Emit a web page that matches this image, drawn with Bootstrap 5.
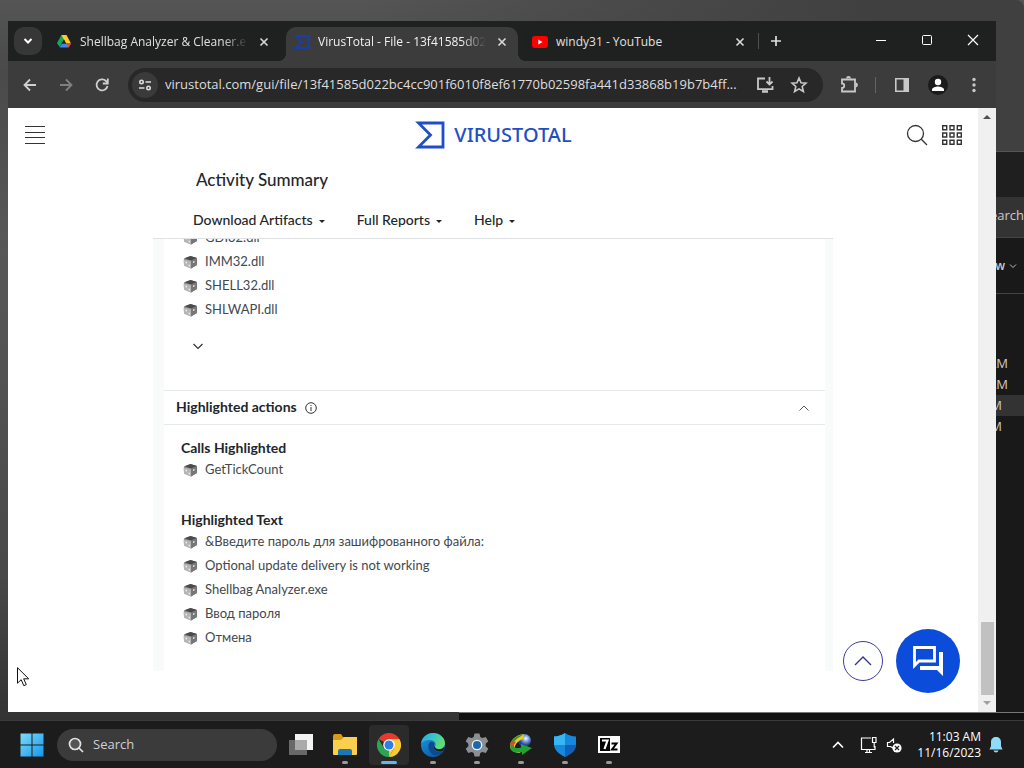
<!DOCTYPE html>
<html lang="en">
<head>
<meta charset="utf-8">
<meta name="viewport" content="width=device-width, initial-scale=1">
<title>VirusTotal - File</title>
<link href="https://cdn.jsdelivr.net/npm/bootstrap@5.3.0/dist/css/bootstrap.min.css" rel="stylesheet">
<script src="https://cdn.jsdelivr.net/npm/bootstrap@5.3.0/dist/js/bootstrap.bundle.min.js"></script>
<style>
  body { font-family: "Open Sans", "Noto Sans", sans-serif; font-size: 13px; background: #111; }
  svg { display: block; flex: none; }
  button { font: inherit; color: inherit; background: none; border: 0; padding: 0; }
  .desk { background: linear-gradient(180deg, #555 0, #4a4a4a 10%, #585858 35%, #484848 80%, #333 100%); }
  .desk-window { inset: 0 0 0 0; background: linear-gradient(90deg, rgba(50,50,50,0) 35%, #404040 85%); border-radius: 8px; }

  /* file manager behind the browser */
  .explorer { left: 459px; right: 0; top: 151px; bottom: 0; background: #191919; color: #ccc; border-top: 1px solid #555; text-align: right; font-size: 13px; }
  .explorer .top-gap { height: 45px; background: #1f1f1f; }
  .explorer .find-row { height: 41px; background: #333; border-bottom: 1px solid #444; line-height: 36px; }
  .explorer .view-row { height: 56px; border-bottom: 1px solid #444; font-size: 12px; font-weight: 600; padding-right: 7px; }
  .explorer .times { padding-top: 59px; }
  .explorer .times li { line-height: 21px; padding-right: 16px; }
  .explorer .times li.near { padding-right: 22px; }
  .explorer .times .picked { background: #333; }
  .explorer .foot { height: 8px; bottom: 0; left: 0; right: 0; background: #121212; border-top: 1px solid #777; }

  .browser { left: 8px; right: 28px; top: 21px; bottom: 8px; background: #3c3c3c; color: #dadada; }
  .tabs { background: #1f2020; padding-left: 6px; height: 40px; }
  .tab-menu { width: 28px; height: 28px; border-radius: 10px; background: #373737; margin-right: 6px; }
  .tab-item { width: 232px; height: 34px; padding: 0 8px 4px; margin-right: 6px; gap: 8px; font-weight: 500; font-size: 12px; min-width: 0; border-radius: 10px 10px 0 0; position: relative; }
  .tab-item.final { margin-right: 2px; }
  .tab-item .tab-text { flex: 1; overflow: hidden; white-space: nowrap; color: #e0e0e0; -webkit-mask-image: linear-gradient(90deg, #000 85%, transparent); mask-image: linear-gradient(90deg, #000 85%, transparent); }
  .tab-item .tab-text.whole { -webkit-mask-image: none; mask-image: none; }
  .tab-item.current { background: #3c3c3c; }
  .tab-item.current .tab-text { color: #f2f2f2; }
  .tab-item.current::before, .tab-item.current::after { content: ""; position: absolute; bottom: 0; width: 8px; height: 8px; }
  .tab-item.current::before { left: -8px; background: radial-gradient(circle at 0 0, #1f2020 8px, #3c3c3c 8px); }
  .tab-item.current::after { right: -8px; background: radial-gradient(circle at 100% 0, #1f2020 8px, #3c3c3c 8px); }
  .caption-btn { width: 46px; height: 38px; color: #fff; }
  .tools { height: 47px; padding: 0 4px; }
  .tool-btn { width: 36px; height: 34px; }
  .omni { height: 34px; border-radius: 17px; background: #282828; margin: 0 8px; padding: 0 15px 0 4px; }
  .omni .site { width: 26px; height: 26px; border-radius: 13px; background: #3a3a3a; }
  .omni input { background: none; border: 0; outline: 0; color: #dedede; font-size: 13px; padding: 0; min-width: 0; margin-left: 7px; }

  /* web page */
  .view { background: #fff; color: #21262b; font-family: Lato, "Open Sans", sans-serif; }
  .page-head { height: 54px; padding: 0 16px 0 17px; }
  .page-head > * { flex: 1; }
  .page-tools { gap: 14px; }
  .wordmark { color: #1f4fc4; font-family: "Noto Sans", sans-serif; font-size: 20px; font-weight: 500; text-decoration: none; gap: 9px; line-height: 28px; }
  .report { max-width: 680px; margin: 0 auto; }
  .report h1 { font-size: 17px; line-height: 36px; margin: 0; padding-left: 43px; font-weight: 500; }
  .menus { height: 41px; padding: 2px 0 0 40px; border-bottom: 1px solid #e0e3e5; gap: 32px; font-size: 14px; font-weight: 500; }
  .menus .dropdown-toggle::after { border-width: 3px; border-bottom: 0; margin-left: 6px; vertical-align: 2px; }
  .clip { overflow: hidden; background: #f9fafa; padding: 0 8px 0 11px; }
  .sheet { background: #fff; }
  .sheet ul { margin: 0; padding: 0 0 0 18px; list-style: none; font-size: 13px; color: #42484e; }
  .sheet li { height: 24px; display: flex; align-items: center; gap: 6px; }
  .sheet ul.cut { margin-top: -13px; }
  .more { height: 68px; padding: 0 0 20px 28px; }
  .sheet h2 { font-size: 14px; font-weight: 700; margin: 0; }
  .band { height: 35px; border: solid #e6e9eb; border-width: 1px 0; padding: 0 15px 0 12px; gap: 8px; }
  .sheet h3 { font-size: 14px; line-height: 20px; font-weight: 700; margin: 0; padding-left: 17px; }
  .details { padding: 13px 0 21px; }
  .details section + section { margin-top: 28px; }
  .floaters { right: 18px; bottom: 19px; gap: 13px; }
  .go-top { width: 40px; height: 40px; border: 1px solid #3c3ca0; border-radius: 50%; color: #33338f; background: #fff; }
  .chat { width: 64px; height: 64px; border-radius: 50%; background: #0b4dda; color: #fff; }
  .bar-v { width: 18px; background: #f0f0f0; padding: 6px 0; }
  .bar-v .thumb { width: 13px; height: 73px; background: #c1c1c1; margin-bottom: 5px; }

  .pointer { left: 17px; bottom: 33px; }

  .task { height: 48px; background: #1c1c1c; border-top: 1px solid #3a3a3a; padding: 0 21px 0 10px; color: #fff; }
  .task-btn { width: 44px; height: 46px; position: relative; }
  .task-btn.open::after { content: ""; position: absolute; left: 19px; bottom: 4px; width: 6px; height: 3px; border-radius: 2px; background: #999; }
  .task-btn.front::before { content: ""; position: absolute; inset: 3px 2px 3px 2px; background: #2b2b2b; border-radius: 4px; }
  .task-btn.front::after { left: 14px; width: 16px; background: #60b8e8; }
  .task-btn svg { position: relative; }
  .find { width: 220px; height: 32px; border-radius: 16px; background: #3b3b3b; margin: 0 2px 0 3px; padding: 0 11px; gap: 9px; }
  .find input { background: none; border: 0; outline: 0; color: #d0d0d0; font-size: 13px; padding: 0; min-width: 0; }
  .find input::placeholder { color: #d0d0d0; opacity: 1; }
  .clock { font-size: 12px; line-height: 16px; text-align: right; margin: 0 8px 0 15px; }
</style>
</head>
<body>
<svg width="0" height="0" class="position-absolute" aria-hidden="true">
  <symbol id="cube" viewBox="0 0 16 16">
    <path d="M1.500 4.500 8 2l6.500 2v7L8.500 14.500 1.500 11.500z" fill="#888"/>
    <path d="M2 4.200 8 2l6.500 2L8.500 6.500z" fill="#4a4a4a"/>
    <path d="M8.500 6.500 14.500 4.200V11L8.500 14.500z" fill="#777"/>
    <path d="M1 5.500 8.500 7v7.500L1.500 11.500z" fill="#b5b5b5"/>
    <path d="M3 7.500l1.500.500v1.500L3 9zM6 10.500l1.500.500v1.500L6 12zM10.500 7.500 12 7v1.500l-1.500.500z" fill="#eee"/>
  </symbol>
  <symbol id="cross" viewBox="0 0 16 16"><path d="M4.500 4.500l7 7m0-7l-7 7" stroke="currentColor" stroke-width="1.600"/></symbol>
</svg>

<div class="d-flex flex-column vh-100 overflow-hidden">
  <main class="desk flex-grow-1 position-relative overflow-hidden">
    <div class="desk-window position-absolute"></div>
    <section class="explorer position-absolute" aria-label="File Explorer">
      <div class="top-gap"></div>
      <div class="find-row">Search</div>
      <div class="view-row d-flex align-items-center justify-content-end gap-1">View <svg width="8" height="8" viewBox="0 0 8 8" fill="none" stroke="#bbb"><path d="M1 2.500l3 3 3-3"/></svg></div>
      <ul class="times list-unstyled m-0"><li>11:02 AM</li><li>11:02 AM</li><li class="near picked">11:02 AM</li><li class="near">11:02 AM</li></ul>
      <div class="foot position-absolute"></div>
    </section>

    <section class="browser position-absolute d-flex flex-column" aria-label="Browser">
      <div class="tabs d-flex align-items-start">
        <button class="tab-menu mt-auto mb-auto d-flex align-items-center justify-content-center" aria-label="Search tabs"><svg width="12" height="12" viewBox="0 0 12 12" fill="none" stroke="#fff" stroke-width="2"><path d="M2.500 4l3.500 3.500L9.500 4"/></svg></button>
        <div class="tab-item d-flex align-items-center mt-auto">
          <svg width="16" height="16" viewBox="0 0 16 16"><path d="M5.500 1h5L8 5.500 3.500 13 1 9z" fill="#14a85a"/><path d="M5.500 1h5L15 9.500h-5z" fill="#ffc928"/><path d="M3.500 13.500 6 9.500h9L12.500 13.500z" fill="#4285f4"/><path d="M10 9.500h5l-2.200 4z" fill="#e8453c"/><path d="M8 5.500l2 4H6z" fill="#1f2020"/></svg>
          <span class="tab-text">Shellbag Analyzer &amp; Cleaner.e</span>
          <button aria-label="Close tab"><svg width="16" height="16"><use href="#cross"/></svg></button>
        </div>
        <div class="tab-item current d-flex align-items-center mt-auto">
          <svg width="16" height="16" viewBox="0 0 16 16" fill="none" stroke="#1b3da5" stroke-width="2"><path d="M1.500 2H15v12H1.500L8 8z"/></svg>
          <span class="tab-text">VirusTotal - File - 13f41585d02</span>
          <button aria-label="Close tab"><svg width="16" height="16"><use href="#cross"/></svg></button>
        </div>
        <div class="tab-item final d-flex align-items-center mt-auto">
          <svg width="16" height="16" viewBox="0 0 16 16"><rect y="2" width="16" height="12" rx="3" fill="#f00"/><path d="M6.300 5.500v5L10.500 8z" fill="#fff"/></svg>
          <span class="tab-text whole">windy31 - YouTube</span>
          <button aria-label="Close tab"><svg width="16" height="16"><use href="#cross"/></svg></button>
        </div>
        <span class="vr align-self-center" style="height:16px"></span>
        <button class="align-self-center ms-2" aria-label="New tab"><svg width="18" height="18" viewBox="0 0 18 18" stroke="#ddd" stroke-width="1.700"><path d="M9 4v10M4 9h10"/></svg></button>
        <div class="d-flex ms-auto">
          <button class="caption-btn d-flex align-items-center justify-content-center" aria-label="Minimize"><svg width="12" height="12" viewBox="0 0 12 12" stroke="#fff"><path d="M1 6.500h10"/></svg></button>
          <button class="caption-btn d-flex align-items-center justify-content-center" aria-label="Maximize"><svg width="12" height="12" viewBox="0 0 12 12" fill="none" stroke="#fff"><rect x="1.500" y="1.500" width="9" height="9" rx="1"/></svg></button>
          <button class="caption-btn d-flex align-items-center justify-content-center" aria-label="Close"><svg width="12" height="12" viewBox="0 0 12 12" stroke="#fff" stroke-width="1.200"><path d="M1 1l10 10M11 1L1 11"/></svg></button>
        </div>
      </div>

      <div class="tools d-flex align-items-center">
        <button class="tool-btn d-flex align-items-center justify-content-center" aria-label="Back"><svg width="16" height="16" viewBox="0 0 16 16" fill="none" stroke="#d0d0d0" stroke-width="1.800"><path d="M14 8H3M8 2.500L2.500 8 8 13.500"/></svg></button>
        <button class="tool-btn d-flex align-items-center justify-content-center" aria-label="Forward"><svg width="16" height="16" viewBox="0 0 16 16" fill="none" stroke="#808080" stroke-width="1.800"><path d="M2 8h11M8 2.500L13.500 8 8 13.500"/></svg></button>
        <button class="tool-btn d-flex align-items-center justify-content-center" aria-label="Reload"><svg width="16" height="16" viewBox="0 0 16 16" fill="none" stroke="#d0d0d0" stroke-width="1.800"><path d="M13.500 9a5.500 5.500 0 1 1-1.500-5l1.500 1.700M13.800 1.500v5h-5"/></svg></button>
        <form class="omni flex-grow-1 d-flex align-items-center">
          <button type="button" class="site d-flex align-items-center justify-content-center" aria-label="Site information"><svg width="14" height="14" viewBox="0 0 14 14" fill="none" stroke="#ddd" stroke-width="1.600"><circle cx="3.500" cy="4" r="1.700"/><path d="M7.500 4H13M1 10h5.500"/><circle cx="10.500" cy="10" r="1.700"/></svg></button>
          <input class="flex-grow-1" aria-label="Address" value="virustotal.com/gui/file/13f41585d022bc4cc901f6010f8ef61770b02598fa441d33868b19b7b4ff...">
          <button type="button" class="ms-2" aria-label="Install page"><svg width="18" height="18" viewBox="0 0 18 18" fill="none" stroke="#c8c8c8" stroke-width="1.800"><path d="M9 2.500H2v10.700h14.500V10M13.500 1v7M10.500 5.500l3 3 3-3"/><path d="M6 15.500h6" stroke-width="2.500"/></svg></button>
          <button type="button" class="ms-3" aria-label="Bookmark"><svg width="18" height="18" viewBox="0 0 18 18" fill="none" stroke="#c8c8c8" stroke-width="1.600"><path d="M9 2l2 4.700 5 .5-3.800 3.300 1.200 5L9 12.900l-4.400 2.600 1.200-5L2 7.200l5-.5z"/></svg></button>
        </form>
        <button class="tool-btn d-flex align-items-center justify-content-center" aria-label="Extensions"><svg width="18" height="18" viewBox="0 0 18 18" fill="none" stroke="#c8c8c8" stroke-width="1.800"><path d="M2 3.500h13V15.500H2v-3.500a2 2 0 0 0 0-4.500z"/><path d="M7 2.500a1.500 1.500 0 0 1 3 0M15.500 7.500a1.500 1.500 0 0 1 0 3"/></svg></button>
        <span class="vr align-self-center mx-2" style="height:16px"></span>
        <button class="tool-btn d-flex align-items-center justify-content-center" aria-label="Side panel"><svg width="16" height="16" viewBox="0 0 16 16"><path d="M1.800 1.800h12.400v12.400H1.800z" fill="none" stroke="#c8c8c8" stroke-width="1.600"/><path d="M9.500 1.500h5v13h-5z" fill="#c8c8c8"/></svg></button>
        <button class="tool-btn d-flex align-items-center justify-content-center" aria-label="Profile"><svg width="20" height="20" viewBox="0 0 20 20"><circle cx="10" cy="10" r="10" fill="#1b1b1b"/><circle cx="10" cy="7" r="3.200" fill="#fff"/><path d="M4 16v-1.500c0-2 4-3 6-3s6 1 6 3V16z" fill="#fff"/></svg></button>
        <button class="tool-btn d-flex align-items-center justify-content-center" aria-label="Menu"><svg width="16" height="16" viewBox="0 0 16 16" fill="#c8c8c8"><circle cx="8" cy="2.500" r="1.700"/><circle cx="8" cy="8" r="1.700"/><circle cx="8" cy="13.500" r="1.700"/></svg></button>
      </div>

      <div class="view flex-grow-1 d-flex overflow-hidden">
        <div class="flex-grow-1 position-relative">
          <header class="page-head d-flex align-items-center">
            <div><button class="d-block" aria-label="Open navigation"><svg width="20" height="20" viewBox="0 0 20 20" stroke="#333"><path d="M0 1.500h20M0 7.500h20M0 12.500h20M0 18.500h20" stroke-width="1.200"/></svg></button></div>
            <a href="#" class="wordmark d-flex align-items-center justify-content-center"><svg width="30" height="28" viewBox="0 0 30 28" fill="none" stroke="#1f4fc4" stroke-width="2.800"><path d="M3.500 2H28v24H3.500L15.500 14z"/></svg>VIRUSTOTAL</a>
            <div class="page-tools d-flex justify-content-end">
              <button aria-label="Search"><svg width="22" height="22" viewBox="0 0 22 22" fill="none" stroke="#333" stroke-width="1.300"><circle cx="9.500" cy="9.500" r="8"/><path d="M15.300 15.300l5.700 5.700"/></svg></button>
              <button aria-label="Apps"><svg width="20" height="20" viewBox="0 0 20 20" fill="none" stroke="#333" stroke-width="1.400"><path d="M.700.700h4v4h-4zM8 .700h4v4H8zM15.300.700h4v4h-4zM.700 8h4v4h-4zM8 8h4v4H8zM15.300 8h4v4h-4zM.700 15.300h4v4h-4zM8 15.300h4v4H8zM15.300 15.300h4v4h-4z"/></svg></button>
            </div>
          </header>

          <div class="report">
            <h1>Activity Summary</h1>
            <div class="menus d-flex align-items-center">
              <button class="dropdown-toggle">Download Artifacts</button>
              <button class="dropdown-toggle">Full Reports</button>
              <button class="dropdown-toggle">Help</button>
            </div>
            <div class="clip">
              <div class="sheet">
                <ul class="cut">
                  <li><svg width="17" height="16"><use href="#cube"/></svg>GDI32.dll</li>
                  <li><svg width="17" height="16"><use href="#cube"/></svg>IMM32.dll</li>
                  <li><svg width="17" height="16"><use href="#cube"/></svg>SHELL32.dll</li>
                  <li><svg width="17" height="16"><use href="#cube"/></svg>SHLWAPI.dll</li>
                </ul>
                <button class="more w-100 d-flex align-items-center" aria-label="Show more"><svg width="12" height="12" viewBox="0 0 12 12" fill="none" stroke="#333" stroke-width="1.200"><path d="M1.500 4L6 8.500 10.500 4"/></svg></button>
                <div class="band d-flex align-items-center">
                  <h2>Highlighted actions</h2>
                  <svg width="12" height="12" viewBox="0 0 12 12" fill="none" stroke="#333"><circle cx="6" cy="6" r="5.300"/><path d="M6 5v4M6 3v1"/></svg>
                  <button class="ms-auto" aria-label="Collapse"><svg width="12" height="12" viewBox="0 0 12 12" fill="none" stroke="#555"><path d="M1.500 8.500L6 4l4.500 4.500"/></svg></button>
                </div>
                <div class="details">
                  <section>
                    <h3>Calls Highlighted</h3>
                    <ul><li><svg width="17" height="16"><use href="#cube"/></svg>GetTickCount</li></ul>
                  </section>
                  <section>
                    <h3>Highlighted Text</h3>
                    <ul>
                      <li><svg width="17" height="16"><use href="#cube"/></svg>&amp;Введите пароль для зашифрованного файла:</li>
                      <li><svg width="17" height="16"><use href="#cube"/></svg>Optional update delivery is not working</li>
                      <li><svg width="17" height="16"><use href="#cube"/></svg>Shellbag Analyzer.exe</li>
                      <li><svg width="17" height="16"><use href="#cube"/></svg>Ввод пароля</li>
                      <li><svg width="17" height="16"><use href="#cube"/></svg>Отмена</li>
                    </ul>
                  </section>
                </div>
              </div>
            </div>
          </div>

          <div class="floaters position-absolute d-flex align-items-center">
            <button class="go-top d-flex align-items-center justify-content-center" aria-label="Back to top"><svg width="18" height="18" viewBox="0 0 18 18" fill="none" stroke="currentColor" stroke-width="1.300"><path d="M1 13l8-8 8 8"/></svg></button>
            <button class="chat d-flex align-items-center justify-content-center" aria-label="Chat"><svg width="32" height="32" viewBox="0 0 32 32"><path d="M2.500 2.500h20v13.500H7l-4.500 4.500z" fill="none" stroke="#fff" stroke-width="2.800"/><path d="M27 7h4v24l-6-6H8v-4h19z" fill="#fff"/></svg></button>
          </div>
        </div>
        <div class="bar-v d-flex flex-column align-items-center" aria-hidden="true">
          <svg width="8" height="6" viewBox="0 0 8 6"><path d="M0 5l4-4 4 4z" fill="#505050"/></svg>
          <div class="thumb mt-auto"></div>
          <svg width="8" height="6" viewBox="0 0 8 6"><path d="M0 1l4 4 4-4z" fill="#a0a0a0"/></svg>
        </div>
      </div>
    </section>

    <svg class="pointer position-absolute" width="13" height="20" viewBox="0 0 13 20"><path d="M.500.700v15.500l3.700-3.500 2.600 6 2.500-1.100-2.600-5.800h5z" fill="#fff" stroke="#111"/></svg>
  </main>

  <footer class="task d-flex align-items-center">
    <button class="task-btn d-flex align-items-center justify-content-center" aria-label="Start"><svg width="24" height="24" viewBox="0 0 24 24"><defs><linearGradient id="w" x2="1" y2="1"><stop stop-color="#7ddcf8"/><stop offset="1" stop-color="#1597ea"/></linearGradient></defs><path d="M.500.500h11v11H.500zM12.500.500h11v11h-11zM.500 12.500h11v11H.500zM12.500 12.500h11v11h-11z" fill="url(#w)"/></svg></button>
    <form class="find d-flex align-items-center"><svg width="16" height="16" viewBox="0 0 16 16" fill="#555" stroke="#e2e2e2" stroke-width="1.700"><circle cx="7" cy="7" r="5.500"/><path d="M11 11l4 4"/></svg><input class="flex-grow-1" type="search" placeholder="Search" aria-label="Search"></form>
    <button class="task-btn d-flex align-items-center justify-content-center" aria-label="Task view"><svg width="24" height="24" viewBox="0 0 24 24"><path d="M6 1h18v16H6z" fill="#f4f4f4"/><path d="M0 7h18v15H0z" fill="#777" fill-opacity=".85"/><path d="M6 7h12v10H6z" fill="#aaa"/></svg></button>
    <button class="task-btn open d-flex align-items-center justify-content-center" aria-label="File Explorer"><svg width="24" height="24" viewBox="0 0 24 24"><path d="M0 3q0-2 2-2h6l2 3h12v6H0z" fill="#d79a1b"/><path d="M0 7h8l3-3h13v17q0 1-1 1H1q-1 0-1-1z" fill="#fbcf4e"/><path d="M5 22v-4q0-2 2-2h10q2 0 2 2v4z" fill="#1976b9"/></svg></button>
    <button class="task-btn open front d-flex align-items-center justify-content-center" aria-label="Chrome"><svg width="24" height="24" viewBox="0 0 24 24"><path d="M12 12L1.600 6a12 12 0 0 1 20.800 0z" fill="#e33b2e"/><path d="M12 6h10.400A12 12 0 0 1 12 24l5.200-9z" fill="#fcc934"/><path d="M1.600 6l5.200 9L12 18l0 6A12 12 0 0 1 1.600 6z" fill="#2da44f"/><path d="M12 24l5.200-9-5.200 1z" fill="#fcc934"/><circle cx="12" cy="12" r="5.800" fill="#fff"/><circle cx="12" cy="12" r="4.500" fill="#2f7de9"/></svg></button>
    <button class="task-btn open d-flex align-items-center justify-content-center" aria-label="Edge"><svg width="24" height="24" viewBox="0 0 24 24"><defs><linearGradient id="e1" x2="1" y2=".4"><stop stop-color="#2aa5dc"/><stop offset=".5" stop-color="#36c5c8"/><stop offset="1" stop-color="#62dd6a"/></linearGradient><linearGradient id="e2" x2=".6" y2="1"><stop stop-color="#1b9de2"/><stop offset="1" stop-color="#1059a8"/></linearGradient></defs><circle cx="12" cy="12" r="12" fill="url(#e2)"/><path d="M0 11C1 4 6 0 12 0c7 0 12 5 12 10 0 4-3 6-6 6-3.500 0-5-1.200-4-2.500C16 10 13 7 9 7 4.500 7 1 8.500 0 11z" fill="url(#e1)"/><path d="M9 9c-3 3-2 10 4 13 4 1 8-1 9.500-4-5 2.500-10 0-10-4 0-2 1.500-2.500.5-4S10 8.500 9 9z" fill="#0c4a8f"/><path d="M12.500 13c-.3 4 5 7 10 4.500l1-3.500-3 2c-3.500.700-6 0-6.500-2z" fill="#1c1c1c"/></svg></button>
    <button class="task-btn open d-flex align-items-center justify-content-center" aria-label="Settings"><svg width="24" height="24" viewBox="0 0 24 24"><path d="M9.500.500h5l.8 3.500 2 1.100 3.500-1 2.500 4.200-2.600 2.500v2.400l2.600 2.500-2.500 4.200-3.500-1-2 1.100-.8 3.500h-5L8.700 20l-2-1.100-3.500 1L.700 15.700l2.600-2.500v-2.400L.700 8.300l2.500-4.200 3.500 1L8.700 4z" fill="#8b8f93"/><circle cx="12" cy="12" r="5.300" fill="#f2f2f2"/><circle cx="12" cy="12" r="4" fill="#1b69ad"/></svg></button>
    <button class="task-btn open d-flex align-items-center justify-content-center" aria-label="Download Manager"><svg width="24" height="24" viewBox="0 0 24 24"><defs><radialGradient id="g" cx=".6" cy=".35"><stop stop-color="#fff"/><stop offset=".4" stop-color="#88aee8"/><stop offset="1" stop-color="#223f92"/></radialGradient></defs><circle cx="15.500" cy="7.500" r="6.500" fill="url(#g)"/><path d="M15 1C6 2 1 8 1 13c0 5 5 7 10 7l1-3c-4 1-7-1-6-4 1-3 5-6 8-7z" fill="#eacb24"/><path d="M15 1C8 2 2 7 1 12l3-1C6 6 11 4 15 1z" fill="#3f8f3a"/><path d="M2 10c-3 7 3 11 11 9v3L23 15l-11-4v3.500c-4 1-7 1-7-2z" fill="#23a132"/><path d="M3 8l-2 4 3 1 3-4z" fill="#d84b24"/></svg></button>
    <button class="task-btn open d-flex align-items-center justify-content-center" aria-label="Security"><svg width="24" height="24" viewBox="0 0 24 24"><path d="M12 0c3 2 7 3.500 11 3.500V11c0 6-5 10-11 13C6 21 1 17 1 11V3.500C5 3.500 9 2 12 0z" fill="#1689dd"/><path d="M12 0v12H1V3.500C5 3.500 9 2 12 0z" fill="#38b6f3"/><path d="M12 12h11c0 6-5 9-11 12z" fill="#0f62b8"/></svg></button>
    <button class="task-btn open d-flex align-items-center justify-content-center" aria-label="7-Zip"><svg width="22" height="17" viewBox="0 0 22 17"><path d="M0 0h22v17H0z" fill="#fff"/><path d="M2 2h10v13H2z" fill="#000"/><path d="M4 4.500h5.500L6.500 13" fill="none" stroke="#fff" stroke-width="2.200"/><path d="M13.500 7.500h5l-4.500 6h5.500" fill="none" stroke="#000" stroke-width="2"/></svg></button>
    <button class="ms-auto" aria-label="Hidden icons"><svg width="12" height="12" viewBox="0 0 12 12" fill="none" stroke="#fff" stroke-width="1.600"><path d="M1 8.500L6 3.500l5 5"/></svg></button>
    <button class="ms-3" aria-label="Network"><svg width="18" height="18" viewBox="0 0 18 18" fill="none" stroke="#fff" stroke-width="1.200"><path d="M11 2H1.500v11.500H15V10M5 16.500h7M7 13.500v3M9.500 13.500v3M12.500 1.500h3.500v5h-3.500zM14.200 6.500v5"/></svg></button>
    <button class="ms-2" aria-label="Volume muted"><svg width="16" height="16" viewBox="0 0 16 16"><path d="M7 11L4.500 9.500H1.500v-4h2l4-3.500v4" fill="none" stroke="#fff" stroke-width="1.200"/><circle cx="11" cy="11" r="4.600" fill="#fff"/><path d="M9 9l4 4m0-4l-4 4" stroke="#222" stroke-width="1.200"/></svg></button>
    <div class="clock"><div>11:03 AM</div><div>11/16/2023</div></div>
    <button aria-label="Notifications"><svg width="14" height="16" viewBox="0 0 14 16" fill="#8fdcf8"><path d="M7 0c3 0 5 2 5 5v4l1.500 3.500H.500L2 9V5c0-3 2-5 5-5zM4.500 13.500h5Q9 15.500 7 15.500t-2.500-2z"/></svg></button>
  </footer>
</div>
</body>
</html>
